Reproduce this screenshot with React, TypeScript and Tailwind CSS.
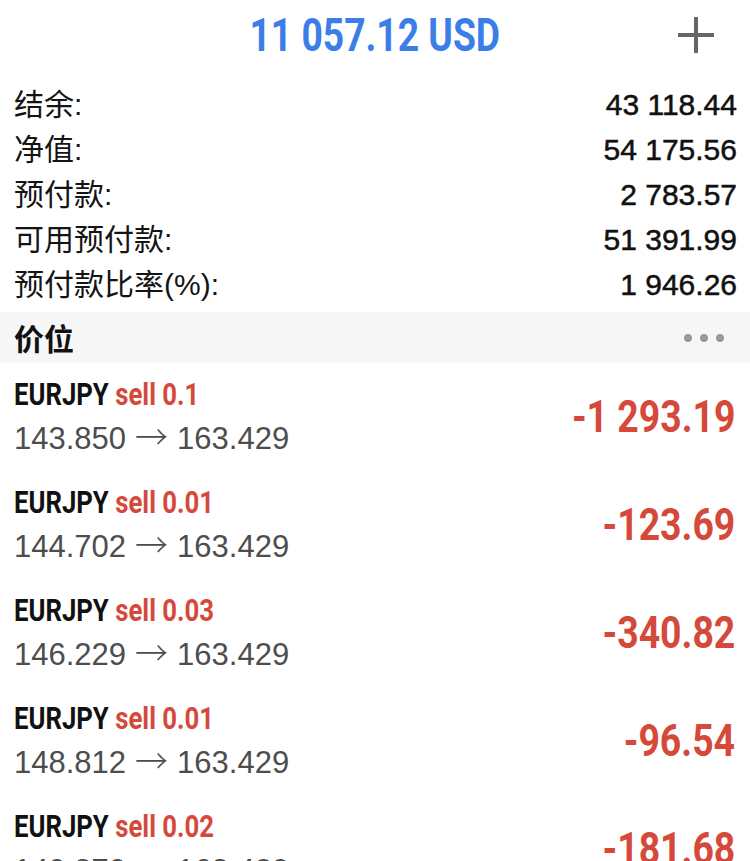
import React from "react";

const COND = {
  fontFamily: 'Roboto, "Liberation Sans", sans-serif',
} as const;

const info = [
  ["结余:", "43 118.44"],
  ["净值:", "54 175.56"],
  ["预付款:", "2 783.57"],
  ["可用预付款:", "51 391.99"],
  ["预付款比率(%):", "1 946.26"],
];

const positions = [
  { lot: "0.1", open: "143.850", cur: "163.429", pl: "-1 293.19" },
  { lot: "0.01", open: "144.702", cur: "163.429", pl: "-123.69" },
  { lot: "0.03", open: "146.229", cur: "163.429", pl: "-340.82" },
  { lot: "0.01", open: "148.812", cur: "163.429", pl: "-96.54" },
  { lot: "0.02", open: "149.370", cur: "163.429", pl: "-181.68" },
];

export default function App() {
  return (
    <div className="w-[750px] h-[861px] overflow-hidden bg-white">
      {/* Header */}
      <div className="relative h-[70px] flex items-center justify-center">
        <div
          className="inline-block text-[46px] leading-none font-bold text-[#3b7ee8] scale-x-[0.81] origin-center whitespace-nowrap"
          style={COND}
        >
          11 057.12 USD
        </div>
        <div className="absolute right-[36px] top-[17px] w-[36px] h-[36px]">
          <div className="absolute left-0 top-[16px] w-[36px] h-[4px] bg-[#666666]" />
          <div className="absolute left-[16px] top-0 w-[4px] h-[36px] bg-[#666666]" />
        </div>
      </div>

      {/* Account info */}
      <div className="pt-[12px] px-[14px]">
        {info.map(([label, value]) => (
          <div key={label} className="h-[45px] flex items-center justify-between">
            <span
              className="text-[30px] text-[#141414]"
              style={{ fontFamily: '"Liberation Sans", "Noto Sans CJK SC", sans-serif' }}
            >
              {label}
            </span>
            <span
              className="text-[30px] text-[#111111] mr-[-1px] [-webkit-text-stroke:0.5px_#111111]"
              style={{ fontFamily: '"Liberation Sans", Arial, sans-serif' }}
            >
              {value}
            </span>
          </div>
        ))}
      </div>

      {/* Section header */}
      <div className="mt-[5px] h-[51px] bg-[#f7f7f7] flex items-center justify-between px-[14px]">
        <span
          className="text-[30px] font-bold text-[#111111]"
          style={{ fontFamily: '"Noto Sans CJK SC", sans-serif' }}
        >
          价位
        </span>
        <div className="flex gap-[8px] mr-[12px]">
          <span className="w-[8px] h-[8px] rounded-full bg-[#9a9a9a]" />
          <span className="w-[8px] h-[8px] rounded-full bg-[#9a9a9a]" />
          <span className="w-[8px] h-[8px] rounded-full bg-[#9a9a9a]" />
        </div>
      </div>

      {/* Positions */}
      <div className="px-[14px]">
        {positions.map((p, i) => (
          <div key={i} className="h-[108px] flex items-center justify-between">
            <div className="flex flex-col self-start pt-[12px]">
              <div className="h-[40px] leading-[40px]">
                <span
                  className="inline-block text-[31px] font-bold scale-x-[0.83] origin-left whitespace-nowrap"
                  style={COND}
                >
                  <span className="text-[#111111]">EURJPY</span>{" "}
                  <span className="text-[#d5493a]">sell {p.lot}</span>
                </span>
              </div>
              <div
                className="h-[48px] leading-[48px] text-[31px] text-[#4d4d4d] whitespace-nowrap"
                style={{ fontFamily: '"Liberation Sans", Arial, sans-serif' }}
              >
                {p.open}
                <span
                  className="mx-[9px] font-light text-[33px] leading-none"
                  style={{ fontFamily: '"Noto Sans CJK SC", sans-serif' }}
                >
                  →
                </span>
                {p.cur}
              </div>
            </div>
            <div
              className="inline-block text-[44px] leading-none font-bold text-[#d5493a] mr-[1px] scale-x-[0.85] origin-right whitespace-nowrap"
              style={COND}
            >
              {p.pl}
            </div>
          </div>
        ))}
      </div>
    </div>
  );
}
